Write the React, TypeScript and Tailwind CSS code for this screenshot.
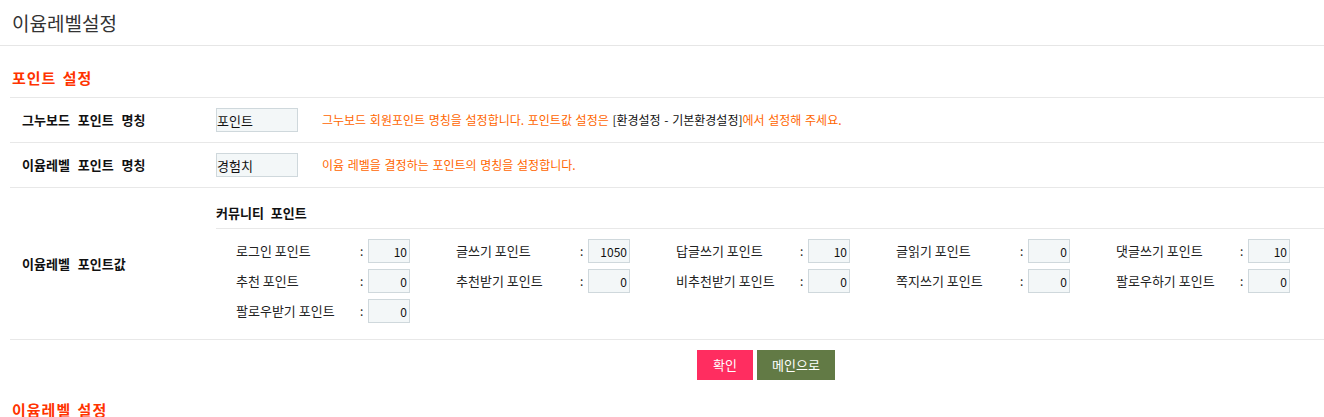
import React from "react";

const font = { fontFamily: '"Noto Sans CJK KR", "Noto Sans", sans-serif' };

const points: [string, string][] = [
  ["로그인 포인트", "10"],
  ["글쓰기 포인트", "1050"],
  ["답글쓰기 포인트", "10"],
  ["글읽기 포인트", "0"],
  ["댓글쓰기 포인트", "10"],
  ["추천 포인트", "0"],
  ["추천받기 포인트", "0"],
  ["비추천받기 포인트", "0"],
  ["쪽지쓰기 포인트", "0"],
  ["팔로우하기 포인트", "0"],
  ["팔로우받기 포인트", "0"],
];

export default function App() {
  return (
    <div className="w-[1324px] h-[417px] overflow-hidden bg-white text-[#222]" style={font}>
      <div className="h-[46px] border-b border-[#e6e6e6] flex items-center pl-[12px]">
        <h1 className="text-[19px] text-[#333] leading-none">이윰레벨설정</h1>
      </div>

      <div className="pl-[10px]">
        <h2 className="pt-[22px] pb-[9px] pl-[2px] text-[15px] font-bold text-[#ff3300] leading-[20px] tracking-[1px] [word-spacing:2px]">포인트 설정</h2>

        <div className="border-t border-[#e8e8e8]">
          <div className="flex h-[45px] items-center border-b border-[#e8e8e8]">
            <div className="w-[206px] pl-[12px] text-[13px] font-bold text-[#111] [word-spacing:5px]">그누보드 포인트 명칭</div>
            <input
              readOnly
              value="포인트"
              className="w-[82px] h-[24px] bg-[#f3f7f8] border border-[#cfd8dc] px-0 text-[13px] text-[#111] outline-none"
              style={font}
            />
            <div className="ml-[24px] text-[12px] text-[#ff6600] [word-spacing:1px]">
              그누보드 회원포인트 명칭을 설정합니다. 포인트값 설정은 <span className="text-[#111]">[환경설정 - 기본환경설정]</span>에서 설정해 주세요.
            </div>
          </div>

          <div className="flex h-[45px] items-center border-b border-[#e8e8e8]">
            <div className="w-[206px] pl-[12px] text-[13px] font-bold text-[#111] [word-spacing:5px]">이윰레벨 포인트 명칭</div>
            <input
              readOnly
              value="경험치"
              className="w-[82px] h-[24px] bg-[#f3f7f8] border border-[#cfd8dc] px-0 text-[13px] text-[#111] outline-none"
              style={font}
            />
            <div className="ml-[24px] text-[12px] text-[#ff6600] [word-spacing:1px]">이윰 레벨을 결정하는 포인트의 명칭을 설정합니다.</div>
          </div>

          <div className="flex h-[152px] items-center border-b border-[#e8e8e8]">
            <div className="w-[206px] pl-[12px] text-[13px] font-bold text-[#111] [word-spacing:5px]">이윰레벨 포인트값</div>
            <div className="flex-1 self-stretch pt-[16px]">
              <div className="h-[25px] border-b border-[#e8e8e8] text-[13px] font-bold text-[#111] leading-[18px] [word-spacing:4px]">커뮤니티 포인트</div>
              <div className="mt-[10px] grid grid-cols-[repeat(5,220px)] gap-y-[6px]">
                {points.map(([label, val]) => (
                  <div key={label} className="flex items-center pl-[20px] h-[24px]">
                    <span className="w-[124px] text-[13px] text-[#222]">{label}</span>
                    <span className="w-[8px] text-[12px] text-[#222]">:</span>
                    <input
                      readOnly
                      value={val}
                      className="w-[42px] h-[24px] bg-[#f3f7f8] border border-[#cfd8dc] pr-[2px] text-right text-[12px] text-[#111] outline-none"
                      style={font}
                    />
                  </div>
                ))}
              </div>
            </div>
          </div>
        </div>

        <div className="flex gap-[4px] pl-[687px] pt-[10px]">
          <button className="w-[56px] h-[30px] bg-[#ff2d60] text-white text-[13px]">확인</button>
          <button className="w-[78px] h-[30px] bg-[#627a45] text-white text-[13px]">메인으로</button>
        </div>

        <h2 className="pt-[20px] pl-[2px] text-[15px] font-bold text-[#ff3300] leading-[20px] tracking-[1px] [word-spacing:2px]">이윰레벨 설정</h2>
      </div>
    </div>
  );
}
